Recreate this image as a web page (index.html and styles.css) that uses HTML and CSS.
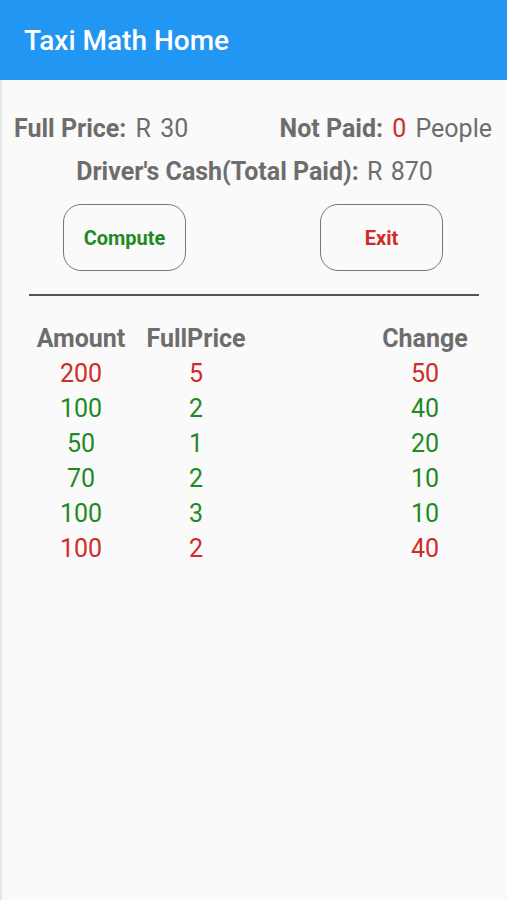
FILE: index.html
```html
<!DOCTYPE html>
<html>
<head>
<meta charset="utf-8">
<link rel="stylesheet" href="styles.css">
</head>
<body>
<header class="appbar"><h1 class="title">Taxi Math Home</h1></header>
<main class="content">
  <div class="row-top">
    <div><span class="lbl">Full Price:</span> <span class="val">R 30</span></div>
    <div><span class="lbl">Not Paid:</span> <span class="red">0</span> <span class="val">People</span></div>
  </div>
  <div class="row-cash"><span class="lbl">Driver's Cash(Total Paid):</span> <span class="val">R 870</span></div>
  <div class="buttons">
    <button class="btn green">Compute</button>
    <button class="btn red">Exit</button>
  </div>
  <hr class="divider">
  <div class="table">
    <div class="trow head"><span class="c1">Amount</span><span class="c2">FullPrice</span><span class="c3">Change</span></div>
    <div class="trow red"><span class="c1">200</span><span class="c2">5</span><span class="c3">50</span></div>
    <div class="trow green"><span class="c1">100</span><span class="c2">2</span><span class="c3">40</span></div>
    <div class="trow green"><span class="c1">50</span><span class="c2">1</span><span class="c3">20</span></div>
    <div class="trow green"><span class="c1">70</span><span class="c2">2</span><span class="c3">10</span></div>
    <div class="trow green"><span class="c1">100</span><span class="c2">3</span><span class="c3">10</span></div>
    <div class="trow red"><span class="c1">100</span><span class="c2">2</span><span class="c3">40</span></div>
  </div>
</main>
</body>
</html>
```
FILE: styles.css
```css
html, body {
  margin: 0;
  padding: 0;
  height: 100%;
}
body {
  background: #fafafa;
  font-family: Roboto, "Liberation Sans", sans-serif;
  color: #6d6d6d;
  display: flex;
  flex-direction: column;
}
.appbar {
  height: 80px;
  background: #2196f3;
  display: flex;
  align-items: center;
  padding-left: 24px;
  box-sizing: border-box;
}
.title {
  margin: 0;
  color: #fff;
  font-size: 28px;
  font-weight: 500;
  line-height: 32px;
  padding-top: 2px;
}
.content {
  flex: 1;
  border-left: 2px solid #e6e6e6;
  padding-top: 34px;
}
.row-top {
  display: flex;
  justify-content: space-between;
  padding: 0 15px 0 12px;
  font-size: 25px;
  line-height: 30px;
  word-spacing: 3px;
}
.lbl { font-weight: 700; word-spacing: 0; }
.val { font-weight: 400; }
.red { color: #d12a2a; }
.green { color: #1f8a25; }
.row-cash {
  margin-top: 13px;
  text-align: center;
  font-size: 25px;
  line-height: 30px;
  word-spacing: 2px;
}
.buttons {
  display: flex;
  gap: 134px;
  padding-left: 61px;
  margin-top: 17px;
}
.btn {
  width: 123px;
  height: 67px;
  border: 1.5px solid #767676;
  border-radius: 18px;
  background: #fafafa;
  font-family: Roboto, "Liberation Sans", sans-serif;
  font-size: 20px;
  font-weight: 700;
  padding: 0;
}
.btn.green { color: #1f8a25; }
.btn.red { color: #d12a2a; }
.divider {
  margin: 23px 28px 0 27px;
  border: 0;
  height: 2px;
  background: #555;
}
.table {
  margin-top: 25px;
}
.trow {
  display: flex;
  padding-left: 29px;
  font-size: 25px;
  line-height: 35px;
}
.trow.head { font-weight: 700; color: #6d6d6d; }
.c1 { width: 100px; text-align: center; }
.c2 { width: 130px; text-align: center; }
.c3 { width: 120px; text-align: center; margin-left: 104px; }
```
